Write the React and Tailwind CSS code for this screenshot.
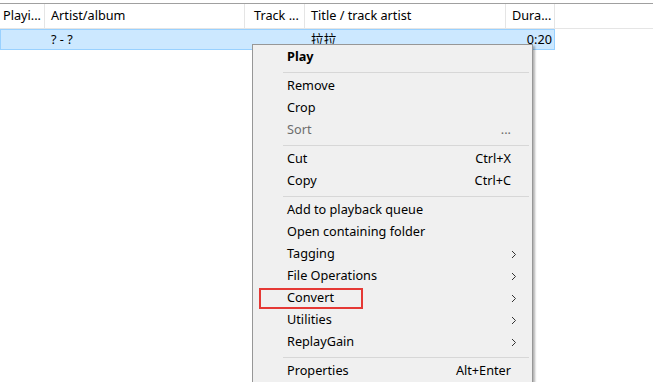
import { ChevronRight } from 'lucide-react';

const font = { fontFamily: '"Noto Sans", "Noto Sans CJK SC", sans-serif' };

const Sep = () => <div className="ml-[30px] mr-[3px] mt-[4px] mb-[2px] h-px bg-[#d7d7d7]" />;

const Arrow = () => (
  <svg width="6" height="9" viewBox="0 0 6 9" className="text-[#333]">
    <path d="M1 1 L4.5 4.5 L1 8" fill="none" stroke="currentColor" strokeWidth="1" />
  </svg>
);

const Item = ({ label, shortcut, sub, bold, disabled, boxed }) => (
  <div className={`relative flex items-center h-[22px] pl-[34px] pr-[21px] ${disabled ? 'text-[#6d6d6d]' : 'text-black'}`}>
    <span className={`flex-1 ${bold ? 'font-bold' : ''}`}>{label}</span>
    {shortcut && <span>{shortcut}</span>}
    {sub && <span className="mr-[-6px]"><Arrow /></span>}
    {boxed && <div className="absolute left-[6px] top-[1px] w-[104px] h-[21px] border-2 border-[#e53935]" />}
  </div>
);

export default function App() {
  return (
    <div className="relative w-[653px] h-[382px] bg-white overflow-hidden text-[12.7px]" style={font}>
      <div className="h-[3px]" />
      {/* header */}
      <div className="flex h-[26px] items-center border-t border-[#a0a0a0] border-b border-b-[#e5e5e5] text-black">
        <div className="w-[45px] h-full flex items-center pl-[3px] border-r border-[#e5e5e5]">Playi...</div>
        <div className="w-[200px] h-full flex items-center pl-[6px] border-r border-[#e5e5e5]">Artist/album</div>
        <div className="w-[60px] h-full flex items-center pl-[9px] border-r border-[#e5e5e5]">Track ...</div>
        <div className="w-[201px] h-full flex items-center pl-[6px] border-r border-[#e5e5e5]">Title / track artist</div>
        <div className="w-[49px] h-full flex items-center pl-[6px] border-r border-[#e5e5e5]">Dura...</div>
      </div>
      {/* selected row */}
      <div className="flex w-[555px] h-[21px] items-center bg-[#cce8ff] border border-[#99d1ff] text-black">
        <div className="w-[44px]" />
        <div className="w-[260px] pl-[6px]">? - ?</div>
        <div className="flex-1 pl-[6px]">拉拉</div>
        <div className="pr-[2px]">0:20</div>
      </div>

      {/* context menu */}
      <div className="absolute left-[252px] top-[44px] w-[281px] bg-[#f0f0f0] border border-[#979797] shadow-[2px_2px_2px_rgba(0,0,0,0.3)] py-px">
        <Item label="Play" bold />
        <Sep />
        <Item label="Remove" />
        <Item label="Crop" />
        <Item label="Sort" shortcut="..." disabled />
        <Sep />
        <Item label="Cut" shortcut="Ctrl+X" />
        <Item label="Copy" shortcut="Ctrl+C" />
        <Sep />
        <Item label="Add to playback queue" />
        <Item label="Open containing folder" />
        <Item label="Tagging" sub />
        <Item label="File Operations" sub />
        <Item label="Convert" sub boxed />
        <Item label="Utilities" sub />
        <Item label="ReplayGain" sub />
        <Sep />
        <Item label="Properties" shortcut="Alt+Enter" />
      </div>
    </div>
  );
}
